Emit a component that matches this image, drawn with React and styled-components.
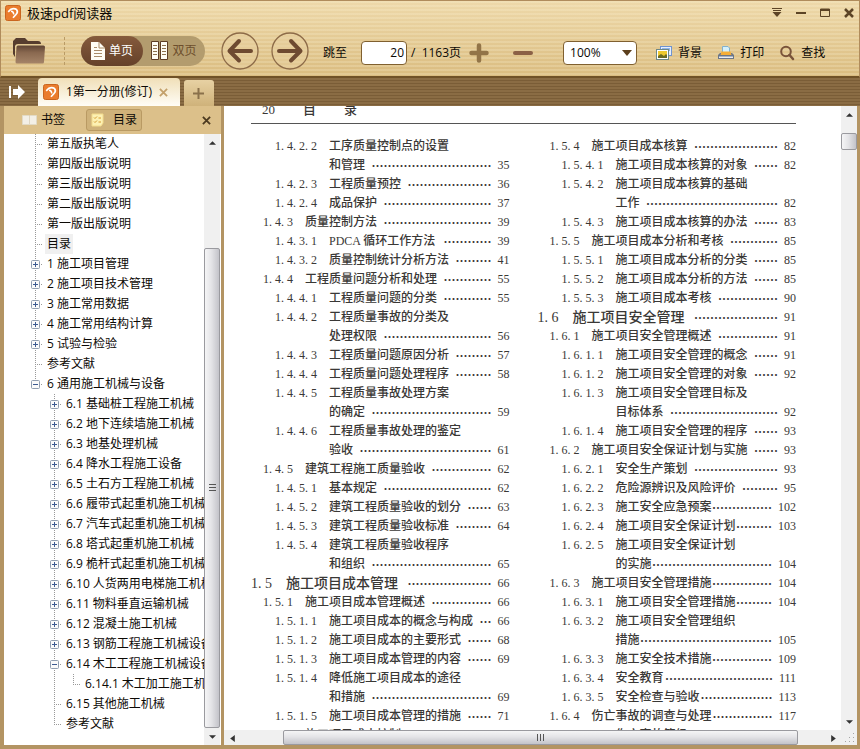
import React, { useState } from 'react';
import styled, { createGlobalStyle, css } from 'styled-components';

const treeItems = [
  { label: '第五版执笔人', level: 0 },
  { label: '第四版出版说明', level: 0 },
  { label: '第三版出版说明', level: 0 },
  { label: '第二版出版说明', level: 0 },
  { label: '第一版出版说明', level: 0 },
  { label: '目录', level: 0, selected: true },
  { label: '1 施工项目管理', level: 0, node: 'plus' },
  { label: '2 施工项目技术管理', level: 0, node: 'plus' },
  { label: '3 施工常用数据', level: 0, node: 'plus' },
  { label: '4 施工常用结构计算', level: 0, node: 'plus' },
  { label: '5 试验与检验', level: 0, node: 'plus' },
  { label: '参考文献', level: 0 },
  { label: '6 通用施工机械与设备', level: 0, node: 'minus', last: true },
  { label: '6.1 基础桩工程施工机械', level: 1, node: 'plus' },
  { label: '6.2 地下连续墙施工机械', level: 1, node: 'plus' },
  { label: '6.3 地基处理机械', level: 1, node: 'plus' },
  { label: '6.4 降水工程施工设备', level: 1, node: 'plus' },
  { label: '6.5 土石方工程施工机械', level: 1, node: 'plus' },
  { label: '6.6 履带式起重机施工机械', level: 1, node: 'plus' },
  { label: '6.7 汽车式起重机施工机械', level: 1, node: 'plus' },
  { label: '6.8 塔式起重机施工机械', level: 1, node: 'plus' },
  { label: '6.9 桅杆式起重机施工机械', level: 1, node: 'plus' },
  { label: '6.10 人货两用电梯施工机械', level: 1, node: 'plus' },
  { label: '6.11 物料垂直运输机械', level: 1, node: 'plus' },
  { label: '6.12 混凝土施工机械', level: 1, node: 'plus' },
  { label: '6.13 钢筋工程施工机械设备', level: 1, node: 'plus' },
  { label: '6.14 木工工程施工机械设备', level: 1, node: 'minus' },
  { label: '6.14.1 木工加工施工机械', level: 2, last: true },
  { label: '6.15 其他施工机械', level: 1 },
  { label: '参考文献', level: 1, last: true },
];

// [number, title, leader length, page]
const leftEntries = [
  ['1. 4. 2. 2', '工序质量控制点的设置'],
  ['', '和管理', 10, 35],
  ['1. 4. 2. 3', '工程质量预控', 7, 36],
  ['1. 4. 2. 4', '成品保护', 9, 37],
  ['1. 4. 3', '质量控制方法', 9, 39],
  ['1. 4. 3. 1', 'PDCA 循环工作方法', 4, 39],
  ['1. 4. 3. 2', '质量控制统计分析方法', 3, 41],
  ['1. 4. 4', '工程质量问题分析和处理', 4, 55],
  ['1. 4. 4. 1', '工程质量问题的分类', 4, 55],
  ['1. 4. 4. 2', '工程质量事故的分类及'],
  ['', '处理权限', 9, 56],
  ['1. 4. 4. 3', '工程质量问题原因分析', 3, 57],
  ['1. 4. 4. 4', '工程质量问题处理程序', 3, 58],
  ['1. 4. 4. 5', '工程质量事故处理方案'],
  ['', '的确定', 10, 59],
  ['1. 4. 4. 6', '工程质量事故处理的鉴定'],
  ['', '验收', 11, 61],
  ['1. 4. 5', '建筑工程施工质量验收', 5, 62],
  ['1. 4. 5. 1', '基本规定', 9, 62],
  ['1. 4. 5. 2', '建筑工程质量验收的划分', 2, 63],
  ['1. 4. 5. 3', '建筑工程质量验收标准', 3, 64],
  ['1. 4. 5. 4', '建筑工程质量验收程序'],
  ['', '和组织', 10, 65],
  ['1. 5', '施工项目成本管理', 7, 66],
  ['1. 5. 1', '施工项目成本管理概述', 5, 66],
  ['1. 5. 1. 1', '施工项目成本的概念与构成', 1, 66],
  ['1. 5. 1. 2', '施工项目成本的主要形式', 2, 68],
  ['1. 5. 1. 3', '施工项目成本管理的内容', 2, 69],
  ['1. 5. 1. 4', '降低施工项目成本的途径'],
  ['', '和措施', 10, 69],
  ['1. 5. 1. 5', '施工项目成本管理的措施', 2, 71],
  ['1. 5. 2', '施工项目成本控制'],
];

const rightEntries = [
  ['1. 5. 4', '施工项目成本核算', 7, 82],
  ['1. 5. 4. 1', '施工项目成本核算的对象', 2, 82],
  ['1. 5. 4. 2', '施工项目成本核算的基础'],
  ['', '工作', 11, 82],
  ['1. 5. 4. 3', '施工项目成本核算的办法', 2, 83],
  ['1. 5. 5', '施工项目成本分析和考核', 4, 85],
  ['1. 5. 5. 1', '施工项目成本分析的分类', 2, 85],
  ['1. 5. 5. 2', '施工项目成本分析的方法', 2, 85],
  ['1. 5. 5. 3', '施工项目成本考核', 5, 90],
  ['1. 6', '施工项目安全管理', 7, 91],
  ['1. 6. 1', '施工项目安全管理概述', 5, 91],
  ['1. 6. 1. 1', '施工项目安全管理的概念', 2, 91],
  ['1. 6. 1. 2', '施工项目安全管理的对象', 2, 92],
  ['1. 6. 1. 3', '施工项目安全管理目标及'],
  ['', '目标体系', 9, 92],
  ['1. 6. 1. 4', '施工项目安全管理的程序', 2, 93],
  ['1. 6. 2', '施工项目安全保证计划与实施', 2, 93],
  ['1. 6. 2. 1', '安全生产策划', 7, 93],
  ['1. 6. 2. 2', '危险源辨识及风险评价', 3, 95],
  ['1. 6. 2. 3', '施工安全应急预案', 5, 102],
  ['1. 6. 2. 4', '施工项目安全保证计划', 3, 103],
  ['1. 6. 2. 5', '施工项目安全保证计划'],
  ['', '的实施', 10, 104],
  ['1. 6. 3', '施工项目安全管理措施', 5, 104],
  ['1. 6. 3. 1', '施工项目安全管理措施', 3, 104],
  ['1. 6. 3. 2', '施工项目安全管理组织'],
  ['', '措施', 11, 105],
  ['1. 6. 3. 3', '施工安全技术措施', 5, 109],
  ['1. 6. 3. 4', '安全教育', 9, 111],
  ['1. 6. 3. 5', '安全检查与验收', 6, 113],
  ['1. 6. 4', '伤亡事故的调查与处理', 5, 117],
  ['1. 6. 4. 1', '伤亡事故等级'],
];

const Logo = () => (
  <svg width="16" height="16" viewBox="0 0 16 16" aria-hidden="true">
    <rect x="0.5" y="0.5" width="15" height="15" rx="2" fill="#ea7c2d" stroke="#c9651f" />
    <path d="M3.200 6.800 6 4.200Q9 2.800 11.500 4.500 13.500 7 11 9.500L8 12.800" fill="none" stroke="#fff" strokeWidth="1.700" strokeLinejoin="round" />
    <path d="M6 6.200Q8.500 6 8.800 9.500" fill="none" stroke="#fff" strokeWidth="1.500" />
  </svg>
);

const FolderIcon = () => (
  <svg width="34" height="28" viewBox="0 0 34 28" aria-hidden="true">
    <defs>
      <linearGradient id="folder" x1="0" y1="0" x2="0" y2="1">
        <stop offset="0" stopColor="#5f4433" />
        <stop offset="0.4" stopColor="#8a6950" />
        <stop offset="1" stopColor="#a58468" />
      </linearGradient>
    </defs>
    <path d="M1 4 4 1H13L16 4H26Q29 4 29 7H6Q3 7 3 10V20L1 17Z" fill="#563d2e" />
    <path d="M6 8.500H31.500Q33 8.500 33 10L32 25Q32 26.500 30.500 26.500H5Q3.500 26.500 3.500 25L4.500 10Q4.500 8.500 6 8.500Z" fill="url(#folder)" />
  </svg>
);

const SinglePageIcon = () => (
  <svg width="14" height="18" viewBox="0 0 14 18" aria-hidden="true">
    <path d="M0 0H8L14 6V18H0Z" fill="#fffdf5" />
    <path d="M8 0V6H14" fill="none" stroke="#a98b68" />
    <path d="M3 5.500H6M3 8.500H11M3 11.500H11M3 14.500H11" stroke="#a98b68" />
  </svg>
);

const DoublePageIcon = () => (
  <svg width="17" height="19" viewBox="0 0 17 19" aria-hidden="true">
    <path d="M0.500 0.500H7.500V18.500H0.500ZM9.500 0.500H16.500V18.500H9.500Z" fill="#fffdf5" stroke="#5d3d24" />
    <path d="M2 4.500H6M2 7.500H6M2 10.500H6M2 13.500H6M11 4.500H15M11 7.500H15M11 10.500H15M11 13.500H15" stroke="#8e7350" />
  </svg>
);

const ArrowIcon = ({ back }) => (
  <svg width="38" height="38" viewBox="0 0 38 38" aria-hidden="true">
    <circle cx="19" cy="19" r="18" fill="#e7cf9f" fillOpacity="0.500" stroke="#8d6b48" strokeWidth="1.300" />
    <path
      d={back ? 'M30 19H9M18 9 8.500 19 18 28.500' : 'M8 19H29M20 9 29.500 19 20 28.500'}
      fill="none"
      stroke="#6e4a31"
      strokeWidth="4"
      strokeLinecap="round"
      strokeLinejoin="round"
    />
  </svg>
);

const PlusIcon = () => (
  <svg width="20" height="20" viewBox="0 0 20 20" aria-hidden="true">
    <path d="M10 2.500V17.500M2.500 10H17.500" stroke="#927448" strokeWidth="4.500" strokeLinecap="round" />
  </svg>
);

const MinusIcon = () => (
  <svg width="20" height="20" viewBox="0 0 20 20" aria-hidden="true">
    <path d="M2 10H18" stroke="#8b6146" strokeWidth="4" strokeLinecap="round" />
  </svg>
);

const BackdropIcon = () => (
  <svg width="16" height="16" viewBox="0 0 16 16" aria-hidden="true">
    <rect x="4.500" y="1.500" width="11" height="9" fill="#e6effc" stroke="#6f93d0" />
    <rect x="6" y="3" width="8" height="3" fill="#8fb4ea" />
    <rect x="0.500" y="4.500" width="12" height="10" fill="#fff" stroke="#6d8888" />
    <rect x="2" y="6" width="9" height="7" fill="#efc92e" />
    <path d="M2 13V11L5 9 8 11 10 9 11 10V13Z" fill="#6b6a22" />
  </svg>
);

const PrintIcon = () => (
  <svg width="16" height="16" viewBox="0 0 16 16" aria-hidden="true">
    <path d="M4.500 8V1.500H10L11.500 3V8Z" fill="#d5f0fb" stroke="#82b1cf" />
    <path d="M2 8H14L16 10V14H0V10Z" fill="#6b7688" />
    <path d="M3.500 6.500H12.500L13.500 10H2.500Z" fill="#f6ae36" />
    <path d="M1 11.500H15V13H1Z" fill="#e8edf4" />
  </svg>
);

const SearchIcon = () => (
  <svg width="15" height="16" viewBox="0 0 15 16" aria-hidden="true">
    <circle cx="6" cy="6.500" r="4.800" fill="none" stroke="#79533a" strokeWidth="2" />
    <path d="M9.500 10 13 14" stroke="#79533a" strokeWidth="2.500" strokeLinecap="round" />
  </svg>
);

const CollapseIcon = () => (
  <svg width="16" height="14" viewBox="0 0 16 14" aria-hidden="true">
    <path d="M0 1H2V13H0ZM4 4H9V0L16 7 9 14V10H4Z" fill="#fff" />
  </svg>
);

const BookmarkIcon = () => (
  <svg width="15" height="12" viewBox="0 0 15 12" aria-hidden="true">
    <path d="M0.500 1.500H7L7.500 2 8 1.500H14.500V10.500H0.500Z" fill="#f3efe6" stroke="#e2dac6" />
    <path d="M7.500 2V10" stroke="#dfd6c2" />
  </svg>
);

const ListIcon = () => (
  <svg width="14" height="14" viewBox="0 0 14 14" aria-hidden="true">
    <path d="M1 1H12V10L10 13H1Z" fill="#fdf1b4" stroke="#f3dc8c" />
    <path d="M3 4.500 4 5.500 6 3.500M3 8.500 4 9.500 6 7.500M7.500 5H10M7.500 9H10" fill="none" stroke="#d49a30" />
  </svg>
);

const CloseIcon = ({ size, color, weight }) => (
  <svg width={size} height={size} viewBox="0 0 10 10" aria-hidden="true">
    <path d="M1 1 9 9M9 1 1 9" stroke={color} strokeWidth={weight} />
  </svg>
);

const Arrow = ({ dir }) => {
  const shapes = { up: 'M0 5 3 2 6 5Z', down: 'M0 1 3 4 6 1Z', left: 'M5 0 1 3 5 6Z', right: 'M1 0 5 3 1 6Z' };
  return (
    <svg width="7" height="7" viewBox="0 0 6 6" aria-hidden="true">
      <path d={shapes[dir]} fill="#333" />
    </svg>
  );
};

const ScrollBar = ({ vertical, before, thumb, after, grip }) => (
  <Bar $vertical={vertical}>
    <BarButton aria-label={vertical ? '向上' : '向左'}><Arrow dir={vertical ? 'up' : 'left'} /></BarButton>
    <Track $grow={before} />
    <Thumb $grow={thumb} $vertical={vertical}>{grip && <Grip $vertical={vertical} />}</Thumb>
    <Track $grow={after} />
    <BarButton aria-label={vertical ? '向下' : '向右'}><Arrow dir={vertical ? 'down' : 'right'} /></BarButton>
  </Bar>
);

const TreeRow = ({ item, onSelect, selected }) => (
  <Row>
    {item.level > 0 && <Guide />}
    {item.level > 1 && <Guide $line />}
    <Guide $line $branch $last={item.last}>
      {item.node && (
        <Expander aria-label={item.node === 'plus' ? '展开' : '折叠'}>
          <svg width="9" height="9" viewBox="0 0 9 9">
            <rect x="0.500" y="0.500" width="8" height="8" rx="1" fill="#fafafa" stroke="#919eb0" />
            <path d={item.node === 'plus' ? 'M2 4.500H7M4.500 2V7' : 'M2 4.500H7'} stroke="#3c5a91" />
          </svg>
        </Expander>
      )}
    </Guide>
    <Label $selected={selected} onClick={onSelect}>{item.label}</Label>
  </Row>
);

const Contents = ({ entries }) => (
  <Column>
    {entries.map(([no, title, dots, page], index) => {
      const depth = no ? no.split('. ').length : 4;
      return (
        <Entry key={index} $depth={depth}>
          <EntryNo $depth={depth}>{no}</EntryNo>
          <span>{title}</span>
          {dots && <Leader>{'…'.repeat(dots)}</Leader>}
          {page && <PageNo>{page}</PageNo>}
        </Entry>
      );
    })}
  </Column>
);

const App = () => {
  const [selected, setSelected] = useState(treeItems.findIndex((el) => el.selected));
  const [page, setPage] = useState('20');
  const [mode, setMode] = useState('single');
  return (
    <Window>
      <GlobalStyle />
      <Header>
        <TitleBar>
          <Logo />
          <Title>极速pdf阅读器</Title>
          <WindowButtons>
            <IconButton aria-label="菜单">
              <svg width="10" height="10" viewBox="0 0 10 10"><path d="M0 0.500H10M1 2.500H9" stroke="#5c4426" /><path d="M0.500 4H9.500L5 9Z" fill="#5c4426" /></svg>
            </IconButton>
            <IconButton aria-label="最小化">
              <svg width="10" height="10" viewBox="0 0 10 10"><path d="M0 5H10" stroke="#5c4426" strokeWidth="2" /></svg>
            </IconButton>
            <IconButton aria-label="最大化">
              <svg width="10" height="10" viewBox="0 0 10 10"><path d="M0.500 1H9.500V8.500H0.500Z" fill="none" stroke="#5c4426" /><path d="M0 2H10" stroke="#5c4426" strokeWidth="2" /></svg>
            </IconButton>
            <IconButton aria-label="关闭"><CloseIcon size={10} color="#5c4426" weight={2.5} /></IconButton>
          </WindowButtons>
        </TitleBar>
        <Toolbar>
          <IconButton aria-label="打开"><FolderIcon /></IconButton>
          <Divider />
          <ModeSwitch>
            <ModeButton $active={mode === 'single'} onClick={() => setMode('single')}><SinglePageIcon />单页</ModeButton>
            <ModeButton $active={mode === 'double'} onClick={() => setMode('double')}><DoublePageIcon />双页</ModeButton>
          </ModeSwitch>
          <NavButtons>
            <IconButton aria-label="上一页"><ArrowIcon back /></IconButton>
            <IconButton aria-label="下一页"><ArrowIcon /></IconButton>
          </NavButtons>
          <Fields>
            <Jump>
              <label htmlFor="page">跳至</label>
              <PageInput id="page" value={page} onChange={(e) => setPage(e.target.value)} />
              <span>/&nbsp; 1163页</span>
            </Jump>
            <ZoomButtons>
              <IconButton aria-label="放大"><PlusIcon /></IconButton>
              <IconButton aria-label="缩小"><MinusIcon /></IconButton>
            </ZoomButtons>
            <ZoomBox>
              <ZoomSelect aria-label="缩放" defaultValue="100%">
                <option>50%</option>
                <option>100%</option>
                <option>200%</option>
              </ZoomSelect>
              <ZoomArrow viewBox="0 0 10 6" aria-hidden="true"><path d="M0 0H10L5 6Z" fill="#5c3f1c" /></ZoomArrow>
            </ZoomBox>
            <Tools>
              <ToolButton><BackdropIcon />背景</ToolButton>
              <ToolButton><PrintIcon />打印</ToolButton>
              <ToolButton><SearchIcon />查找</ToolButton>
            </Tools>
          </Fields>
        </Toolbar>
      </Header>
      <TabStrip>
        <CollapseButton aria-label="收起"><CollapseIcon /></CollapseButton>
        <Tab>
          <Logo />
          <span>1第一分册(修订)</span>
          <IconButton aria-label="关闭标签"><CloseIcon size={9} color="#c3a06a" weight={2} /></IconButton>
        </Tab>
        <NewTab aria-label="新建标签">
          <svg width="11" height="11" viewBox="0 0 11 11"><path d="M5.500 0V11M0 5.500H11" stroke="#8a714b" strokeWidth="2" /></svg>
        </NewTab>
      </TabStrip>
      <Body>
        <Sidebar>
          <SideHeader>
            <SideTab><BookmarkIcon />书签</SideTab>
            <SideTab $active><ListIcon />目录</SideTab>
            <SideClose aria-label="关闭侧栏"><CloseIcon size={9} color="#4c3a20" weight={2} /></SideClose>
          </SideHeader>
          <TreePane>
            <Tree>
              {treeItems.map((item, index) => (
                <TreeRow key={index} item={item} selected={index === selected} onSelect={() => setSelected(index)} />
              ))}
            </Tree>
            <ScrollBar vertical before={98} thumb={479} after={1} grip />
          </TreePane>
        </Sidebar>
        <Viewer>
          <Page>
            <RunningHead><span>20</span><span>目</span><span>录</span></RunningHead>
            <Columns>
              <Contents entries={leftEntries} />
              <Contents entries={rightEntries} />
            </Columns>
          </Page>
          <ScrollBar vertical before={11} thumb={15} after={565} />
          <ScrollBar before={43} thumb={515} after={27} grip />
          <Corner>
            <svg width="10" height="10" viewBox="0 0 10 10" aria-hidden="true">
              <path d="M8 0h1v1h-1zM8 4h1v1h-1zM4 4h1v1h-1zM8 8h1v1h-1zM4 8h1v1h-1zM0 8h1v1h-1z" fill="#a5a5a5" />
            </svg>
          </Corner>
        </Viewer>
      </Body>
    </Window>
  );
};

const GlobalStyle = createGlobalStyle`
  * {
    box-sizing: border-box;
  }
  body {
    margin: 0;
    overflow: hidden;
    font: 12px/20px "Open Sans", "Noto Sans CJK SC", sans-serif;
    color: #0c0905;
  }
  button {
    border: 0;
    padding: 0;
    background: none;
    font: inherit;
    color: inherit;
    cursor: pointer;
  }
  svg {
    display: block;
    flex: none;
  }
`;

const Window = styled.div`
  height: 100vh;
  display: flex;
  flex-direction: column;
  background: #b39463;
`;
const Header = styled.header`
  flex: none;
  border: 1px solid #b08c5c;
  border-bottom: 2px solid #6f5127;
  background:
    repeating-linear-gradient(rgba(255, 248, 220, 0.2) 0 2px, transparent 2px 4px),
    linear-gradient(#eed9aa, #dabc80);
`;
const TitleBar = styled.div`
  display: flex;
  align-items: center;
  gap: 6px;
  height: 24px;
  padding: 0 5px 0 4px;
`;
const Title = styled.h1`
  margin: 0;
  font-size: 13px;
  font-weight: 400;
`;
const WindowButtons = styled.div`
  display: flex;
  gap: 14px;
  margin-left: auto;
`;
const IconButton = styled.button`
  display: flex;
  align-items: center;
  justify-content: center;
`;
const Toolbar = styled.div`
  display: flex;
  align-items: center;
  height: 51px;
  padding: 0 11px;
`;
const Divider = styled.div`
  height: 28px;
  margin: 0 16px 0 18px;
  border-left: 1px dashed #b99b66;
`;
const ModeSwitch = styled.div`
  display: flex;
  height: 30px;
  border-radius: 15px;
  background: #b39c6e;
`;
const ModeButton = styled.button`
  display: flex;
  align-items: center;
  justify-content: center;
  gap: 4px;
  width: 62px;
  border-radius: 15px;
  color: ${({ $active }) => ($active ? '#fff' : '#6d4e2c')};
  background: ${({ $active }) => ($active ? 'linear-gradient(#855a3c, #65412a)' : 'none')};
`;
const NavButtons = styled.div`
  display: flex;
  gap: 12px;
  margin: 0 14px 0 16px;
`;
const Fields = styled.div`
  display: flex;
  align-items: center;
  padding-top: 4px;
`;
const Jump = styled.div`
  display: flex;
  align-items: center;
  label {
    margin-right: 14px;
  }
  span {
    margin-left: 4px;
  }
`;
const field = css`
  height: 24px;
  border: 1px solid #80602f;
  border-radius: 4px;
  background: #fff;
  font: inherit;
  color: inherit;
`;
const PageInput = styled.input`
  ${field}
  width: 46px;
  padding: 0 2px;
  text-align: right;
`;
const ZoomButtons = styled.div`
  display: flex;
  gap: 24px;
  margin: 0 30px 0 8px;
`;
const ZoomBox = styled.div`
  position: relative;
`;
const ZoomSelect = styled.select`
  ${field}
  appearance: none;
  display: block;
  width: 74px;
  padding: 0 6px;
`;
const ZoomArrow = styled.svg`
  position: absolute;
  top: 9px;
  right: 5px;
  width: 10px;
  height: 6px;
  pointer-events: none;
`;
const Tools = styled.div`
  display: flex;
  gap: 16px;
  margin-left: 19px;
`;
const ToolButton = styled.button`
  display: flex;
  align-items: center;
  gap: 6px;
`;
const TabStrip = styled.nav`
  display: flex;
  align-items: flex-end;
  flex: none;
  height: 28px;
  padding-left: 4px;
  background: repeating-linear-gradient(#8a6c44 0 2px, #7a5d37 2px 3px);
`;
const CollapseButton = styled.button`
  display: flex;
  align-items: center;
  justify-content: center;
  width: 26px;
  height: 28px;
  margin-right: 8px;
`;
const Tab = styled.div`
  display: flex;
  align-items: center;
  gap: 7px;
  height: 28px;
  padding: 0 12px 0 5px;
  border-radius: 4px 4px 0 0;
  background: linear-gradient(#f0dfb8, #fffdf6);
`;
const NewTab = styled.button`
  display: flex;
  align-items: center;
  justify-content: center;
  width: 30px;
  height: 26px;
  margin-left: 4px;
  border-radius: 3px 3px 0 0;
  background: linear-gradient(#e7d1a3, #cfb27a);
`;
const Body = styled.main`
  display: flex;
  flex: 1;
  min-height: 0;
  padding: 0 3px 4px 4px;
  gap: 3px;
`;
const Sidebar = styled.aside`
  display: flex;
  flex-direction: column;
  flex: none;
  width: 217px;
  background: #dcc08a;
`;
const SideHeader = styled.div`
  display: flex;
  align-items: center;
  flex: none;
  height: 28px;
  padding: 0 10px 0 13px;
  gap: 16px;
`;
const SideTab = styled.button`
  display: flex;
  align-items: center;
  justify-content: center;
  gap: ${({ $active }) => ($active ? 8 : 4)}px;
  height: 22px;
  padding: 0 4px;
  border: 1px solid ${({ $active }) => ($active ? '#b99a63' : 'transparent')};
  border-radius: 3px;
  background: ${({ $active }) => ($active ? '#cfb27a' : 'none')};
`;
const SideClose = styled(IconButton)`
  margin-left: auto;
`;
const TreePane = styled.div`
  display: flex;
  flex: 1;
  min-height: 0;
  background: #fff;
  padding-right: 1px;
`;
const Tree = styled.div`
  flex: 1;
  min-width: 0;
  overflow: hidden;
  padding-left: 22px;
`;
const Row = styled.div`
  display: flex;
  height: 20px;
  white-space: nowrap;
`;
const Guide = styled.span`
  display: flex;
  align-items: center;
  flex: none;
  width: 19px;
  padding-left: 5px;
  background-repeat: no-repeat;
  background-image:
    ${({ $line }) => ($line ? 'repeating-linear-gradient(#999 0 1px, transparent 1px 2px)' : 'none')},
    ${({ $branch }) => ($branch ? 'repeating-linear-gradient(90deg, #999 0 1px, transparent 1px 2px)' : 'none')};
  background-size: 1px ${({ $last }) => ($last ? '10px' : '20px')}, 8px 1px;
  background-position: 9px 0, 9px 10px;
`;
const Expander = styled.button`
  height: 9px;
`;
const Label = styled.button`
  flex: none;
  height: 20px;
  padding: 0 2px;
  background: ${({ $selected }) => ($selected ? '#f0f0f0' : 'none')};
`;
const Viewer = styled.section`
  display: grid;
  flex: 1;
  min-width: 0;
  grid-template: minmax(0, 1fr) 15px / minmax(0, 1fr) 16px;
  background: #fff;
`;
const Page = styled.article`
  overflow: hidden;
  padding: 0 45px 0 27px;
  font-family: "Liberation Serif", "Noto Sans CJK SC", serif;
  font-weight: 500;
  color: #3a3836;
`;
const RunningHead = styled.div`
  display: flex;
  gap: 28px;
  height: 24px;
  margin-top: -6px;
  padding-left: 11px;
  border-bottom: 1px solid #555;
  font-size: 13px;
`;
const Columns = styled.div`
  display: grid;
  grid-template-columns: 1fr 1fr;
  gap: 28px;
  padding-top: 13px;
`;
const Column = styled.div`
  min-width: 0;
`;
const Entry = styled.div`
  display: flex;
  height: 19px;
  line-height: 19px;
  white-space: nowrap;
  padding-left: ${({ $depth }) => ($depth - 2) * 12}px;
  font-size: ${({ $depth }) => ($depth === 2 ? 14 : 12)}px;
`;
const EntryNo = styled.span`
  flex: none;
  width: ${({ $depth }) => ({ 2: 35, 3: 42, 4: 54 })[$depth]}px;
`;
const Leader = styled.span`
  margin-left: auto;
  font-family: "Noto Sans CJK SC", sans-serif;
  font-size: 12px;
  font-weight: 700;
`;
const PageNo = styled.span`
  margin-left: 6px;
  font-size: 12px;
`;
const Bar = styled.div`
  display: flex;
  flex: none;
  flex-direction: ${({ $vertical }) => ($vertical ? 'column' : 'row')};
  ${({ $vertical }) => ($vertical ? 'width: 16px;' : 'height: 15px;')}
  background: #f0f0f0;
`;
const BarButton = styled.button`
  display: flex;
  align-items: center;
  justify-content: center;
  flex: none;
  min-width: 16px;
  height: 16px;
`;
const Track = styled.div`
  flex: ${({ $grow }) => $grow} 1 0;
`;
const Thumb = styled.div`
  display: flex;
  align-items: center;
  justify-content: center;
  flex: ${({ $grow }) => $grow} 1 0;
  border: 1px solid #9a9a9f;
  border-radius: 2px;
  background: linear-gradient(${({ $vertical }) => ($vertical ? '90deg' : '180deg')}, #f5f5f6, #e4e4e7 45%, #c3c3c9);
`;
const Grip = styled.span`
  width: 7px;
  height: 7px;
  background: repeating-linear-gradient(${({ $vertical }) => ($vertical ? '180deg' : '90deg')}, #555 0 1px, transparent 1px 3px);
`;
const Corner = styled.div`
  display: flex;
  align-items: flex-end;
  justify-content: flex-end;
  padding: 2px;
  background: #f0f0f0;
`;

export default App;
